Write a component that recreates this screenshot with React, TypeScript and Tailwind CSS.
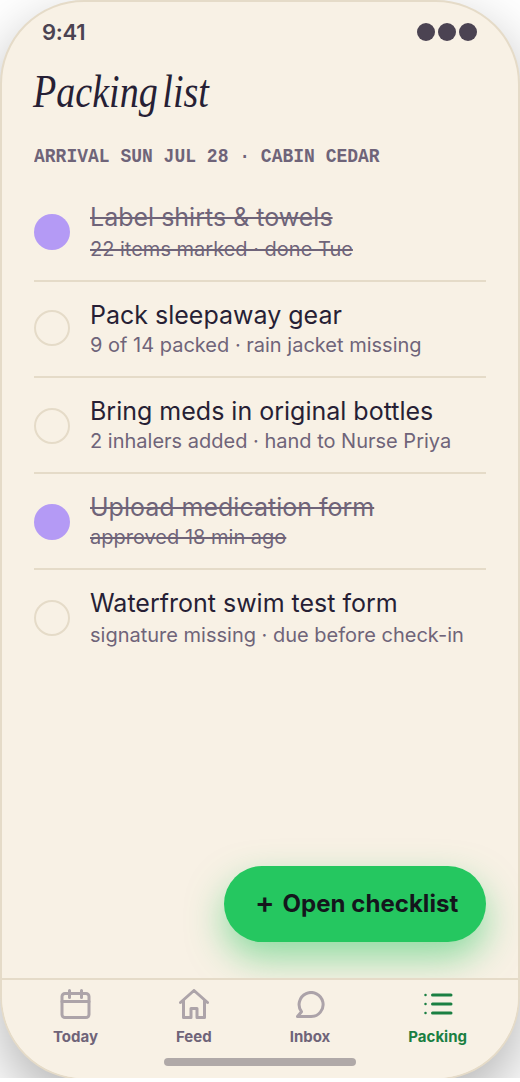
import type { ReactNode } from "react";

const items = [
  { title: "Label shirts & towels", note: "22 items marked · done Tue", done: true, dot: "mt-7", top: "pt-4", gap: "mt-[2px]" },
  { title: "Pack sleepaway gear", note: "9 of 14 packed · rain jacket missing", done: false, dot: "mt-7", top: "pt-[18px]", gap: "mt-0" },
  { title: "Bring meds in original bottles", note: "2 inhalers added · hand to Nurse Priya", done: false, dot: "mt-[30px]", top: "pt-[18px]", gap: "mt-0" },
  { title: "Upload medication form", note: "approved 18 min ago", done: true, dot: "mt-[30px]", top: "pt-[18px]", gap: "mt-0" },
  { title: "Waterfront swim test form", note: "signature missing · due before check-in", done: false, dot: "mt-[30px]", top: "pt-[18px]", gap: "mt-[2px]" },
];

function Tab({ label, active, children }: { label: string; active?: boolean; children: ReactNode }) {
  return (
    <div className={`flex flex-col items-center gap-[7px] ${active ? "text-[#1a7f42]" : "text-[#6f6479]"}`}>
      <svg viewBox="0 0 32 32" className={`size-8 ${active ? "" : "opacity-55"}`} fill="none" stroke="currentColor" strokeWidth="3" strokeLinecap="round" strokeLinejoin="round">
        {children}
      </svg>
      {label}
    </div>
  );
}

export default function App() {
  return (
    <div className="h-[1082px] w-[520px] bg-white font-['Inter',sans-serif]">
      <div className="h-[1078px] w-[520px] overflow-hidden">
        <div className="relative flex h-[1080px] w-[520px] flex-col overflow-hidden rounded-[84px] border-2 border-[#e5dbc8] bg-[#f8f1e5] shadow-[0_24px_60px_rgba(0,0,0,0.3)]">
          <div className="flex h-[60px] items-center justify-between pr-[41px] pl-10">
            <span className="text-[22px] font-semibold tracking-[-0.25px] text-[#4b4352]">9:41</span>
            <div className="flex gap-[3px]">
              <i className="size-[18px] rounded-full bg-[#4b4352]" />
              <i className="size-[18px] rounded-full bg-[#4b4352]" />
              <i className="size-[18px] rounded-full bg-[#4b4352]" />
            </div>
          </div>
          <div className="h-[76px] px-[31px]">
            <h1 className="w-max origin-left scale-x-[0.828] font-['Liberation_Serif',serif] text-[46px] leading-[60px] text-[#271f35] italic [word-spacing:-6px]">Packing list</h1>
          </div>
          <p className="h-[48px] px-8 pt-[6px] font-['Liberation_Mono',monospace] text-[18px] leading-6 font-bold text-[#6f6479]"><span className="inline-block scale-y-[1.13]">ARRIVAL SUN JUL 28 · CABIN CEDAR</span></p>
          <ul className="px-8">
            {items.map((it) => (
              <li key={it.title} className="flex h-24 gap-5 border-b-2 border-[#e5dbc8] last:border-0">
                <span className={`size-9 shrink-0 rounded-full ${it.dot} ${it.done ? "bg-[#b49af5]" : "border-2 border-[#e5dbc8]"}`} />
                <div className={`whitespace-nowrap ${it.top} ${it.done ? "text-[#6f6479] line-through" : "text-[#271f35]"}`}>
                  <div className="text-[25px] leading-[30px]">{it.title}</div>
                  <div className={`text-[20px] leading-[30px] text-[#6f6479] ${it.gap}`}>{it.note}</div>
                </div>
              </li>
            ))}
          </ul>
          <div className="mt-auto flex justify-end px-8 pb-9">
            <button className="flex h-[76px] w-[262px] items-center gap-2 rounded-full bg-[#25c760] pl-[31px] text-[24px] font-bold whitespace-nowrap text-[#14161c] shadow-[0_16px_36px_rgba(37,199,96,0.5)]">
              <span className="-mt-[3px] text-[29px] leading-6 font-semibold">+</span><span className="tracking-[0.04px]">Open checklist</span>
            </button>
          </div>
          <nav className="relative flex h-[100px] shrink-0 justify-between border-t-2 border-[#e5dbc8] bg-[#f8f1e5] px-[51px] pt-[8px] text-[15px] leading-5 font-bold">
            <Tab label="Today">
              <rect x="3" y="5.5" width="27" height="24" rx="3" />
              <path d="M3 13.5h27M10.5 2.5v7M22.5 2.5v7" />
            </Tab>
            <Tab label="Feed">
              <path d="M2.5 14.5 16 2.5l13.5 12M5.5 12.5v17H13v-9h6v9h7.5v-17" />
            </Tab>
            <Tab label="Inbox">
              <path d="M3.5 28.5h13.500a12 12 0 1 0-9.500-4.800z" />
            </Tab>
            <Tab label="Packing" active>
              <path d="M10.5 7H29M10.5 16H29M10.5 25H29" />
              <path d="M3.500 7h.01M3.500 16h.01M3.500 25h.01" strokeWidth="2.5" />
            </Tab>
            <div className="absolute bottom-3 left-[162px] h-2 w-48 rounded-full bg-[#b0a9a8]" />
          </nav>
        </div>
      </div>
    </div>
  );
}
